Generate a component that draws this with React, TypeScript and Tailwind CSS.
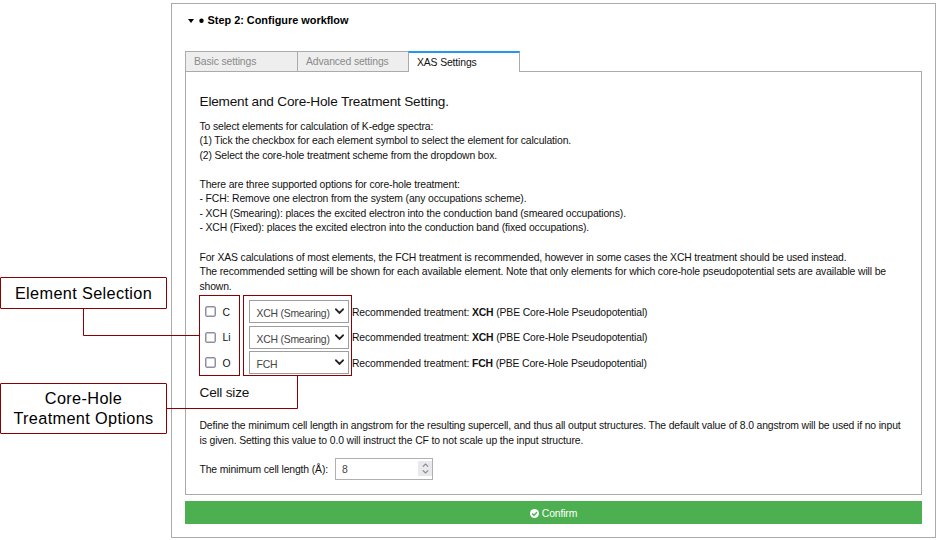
import type { ReactNode } from "react";

const SANS = "font-['Liberation_Sans',Arial,sans-serif]";

function Line({ children, className = "" }: { children?: ReactNode; className?: string }) {
  return <div className={`h-[14.57px] leading-[14.57px] whitespace-nowrap ${className}`}>{children}</div>;
}

function Chevron() {
  return (
    <svg className="mt-[7px] h-[7px] w-[9px] shrink-0" viewBox="0 0 9 7" fill="none" stroke="#222" strokeWidth="1.9">
      <path d="M1 1.3 4.5 4.9 8 1.3" strokeLinecap="round" />
    </svg>
  );
}

interface ElementRow {
  symbol: string;
  option: string;
  scheme: string;
}

const rows: ElementRow[] = [
  { symbol: "C", option: "XCH (Smearing)", scheme: "XCH" },
  { symbol: "Li", option: "XCH (Smearing)", scheme: "XCH" },
  { symbol: "O", option: "FCH", scheme: "FCH" },
];

function TreatmentRow({ symbol, option, scheme }: ElementRow) {
  return (
    <div className="flex h-[25.6px] items-center whitespace-nowrap">
      <div className="ml-[5.5px] h-[11px] w-[11px] shrink-0 rounded-[2px] border-[1.5px] border-[#8f8f9d] bg-white shadow-[inset_0_0_0_0.5px_#8f8f9d]" />
      <div className="ml-[6.5px] w-[26.5px] pt-[2px]">{symbol}</div>
      <div className="flex h-[23px] w-[100px] shrink-0 justify-between border border-[#9e9e9e] pr-[4px] pl-[6.5px] text-[#444]">
        <span className="pt-[2px] text-[10.4px] leading-[22px] tracking-[-0.22px]">{option}</span>
        <Chevron />
      </div>
      <div className="ml-[3px] pt-[2px]">
        Recommended treatment: <b>{scheme}</b> (PBE Core-Hole Pseudopotential)
      </div>
    </div>
  );
}

function Tab({ label, className }: { label: string; className: string }) {
  return (
    <div className={`h-[21px] border border-r-0 border-[#ababab] bg-[#eeeeee] pl-[8px] leading-[20px] text-[#8a8a8a] ${className}`}>
      {label}
    </div>
  );
}

export default function App() {
  return (
    <div className={`relative flex h-[540px] w-[939px] overflow-hidden bg-white text-[10.4px] tracking-[-0.135px] text-[#111] ${SANS}`}>
      <aside className="flex w-[171px] shrink-0 flex-col pt-[277px] text-center text-[16.3px] tracking-[0.35px] text-black">
        <div className="h-[32px] w-[167px] rounded-[1px] border border-[#8b0000] leading-[31px]">Element Selection</div>
        <div className="mt-[74px] h-[51px] w-[167px] rounded-[1px] border border-[#8b0000] pt-[4px] leading-[20px]">
          Core-Hole
          <br />
          Treatment Options
        </div>
      </aside>

      <main className="mt-[3px] h-[535px] w-[765px] border border-[#ababab] px-[13px]">
        <div className="flex h-[33px] items-center pl-[3px] text-[10.9px] font-bold tracking-normal text-black">
          <svg className="h-[4px] w-[6px]" viewBox="0 0 6 4">
            <path d="M0 0h6L3 4z" fill="#000" />
          </svg>
          <svg className="ml-[5px] h-[5px] w-[5px]" viewBox="0 0 5 5">
            <circle cx="2.5" cy="2.7" r="2.2" fill="#000" />
          </svg>
          <span className="ml-[3.5px]">Step 2: Configure workflow</span>
        </div>

        <div className="relative mt-[14px] flex h-[21px]">
          <Tab label="Basic settings" className="w-[112px]" />
          <Tab label="Advanced settings" className="w-[111px]" />
          <div className="h-[21px] w-[112px] border-x border-t-2 border-x-[#ababab] border-t-[#2196f3] bg-white pl-[8px] leading-[20px]">
            XAS Settings
          </div>
        </div>

        <section className="-mt-px h-[424px] w-[737px] border border-[#ababab] pt-[20px] pr-[13px] pl-[13.5px]">
          <h2 className="h-[20px] text-[13.6px] leading-[20px] tracking-[-0.19px]">Element and Core-Hole Treatment Setting.</h2>
          <div className="mt-[7.5px]">
            <Line>To select elements for calculation of K-edge spectra:</Line>
            <Line>(1) Tick the checkbox for each element symbol to select the element for calculation.</Line>
            <Line>(2) Select the core-hole treatment scheme from the dropdown box.</Line>
            <Line />
            <Line>There are three supported options for core-hole treatment:</Line>
            <Line>- FCH: Remove one electron from the system (any occupations scheme).</Line>
            <Line>- XCH (Smearing): places the excited electron into the conduction band (smeared occupations).</Line>
            <Line>- XCH (Fixed): places the excited electron into the conduction band (fixed occupations).</Line>
            <Line />
            <Line>For XAS calculations of most elements, the FCH treatment is recommended, however in some cases the XCH treatment should be used instead.</Line>
            <Line>The recommended setting will be shown for each available element. Note that only elements for which core-hole pseudopotential sets are available will be</Line>
            <Line>shown.</Line>
          </div>
          <div className="mt-[4.5px]">
            {rows.map((row) => (
              <TreatmentRow key={row.symbol} {...row} />
            ))}
          </div>
          <h2 className="mt-[7.5px] h-[20px] text-[13.6px] leading-[20px] tracking-[-0.19px]">Cell size</h2>
          <div className="mt-[16px]">
            <Line>Define the minimum cell length in angstrom for the resulting supercell, and thus all output structures. The default value of 8.0 angstrom will be used if no input</Line>
            <Line>is given. Setting this value to 0.0 will instruct the CF to not scale up the input structure.</Line>
          </div>
          <div className="mt-[9.5px] flex h-[22px] items-center">
            <span className="w-[135.5px] pt-[3px]">The minimum cell length (Å):</span>
            <div className="flex h-[22px] w-[98px] items-center justify-between border border-[#b0b0b0] pl-[6px] text-[#444]">
              <span className="pt-[3px]">8</span>
              <div className="flex h-[15px] w-[14px] items-center justify-center bg-[#e9e9ed]">
                <svg className="h-[11px] w-[7px]" viewBox="0 0 7 11" fill="none" stroke="#8b8b8b" strokeWidth="1.2">
                  <path d="M.8 3.6 3.5 1 6.2 3.6M.8 7.4 3.5 10 6.2 7.4" />
                </svg>
              </div>
            </div>
          </div>
        </section>

        <button className="mt-[6px] flex h-[23px] w-[737px] items-center justify-center bg-[#4caf50] pt-[2px] text-white">
          <svg className="mr-[3px] h-[9px] w-[9px]" viewBox="0 0 9 9" fill="none">
            <circle cx="4.5" cy="4.5" r="4.5" fill="#fff" />
            <path d="M2.2 4.5 4 6.2 7 3.2" stroke="#4caf50" strokeWidth="1.4" />
          </svg>
          Confirm
        </button>
      </main>

      <svg className="pointer-events-none absolute inset-0" width="939" height="540" fill="none" stroke="#8b0000">
        <rect x="199.5" y="295.5" width="40" height="80" />
        <rect x="243.5" y="295.5" width="108" height="80" />
        <path d="M83.5 309V335.5H199M297.5 376V408.5H167" />
      </svg>
    </div>
  );
}
